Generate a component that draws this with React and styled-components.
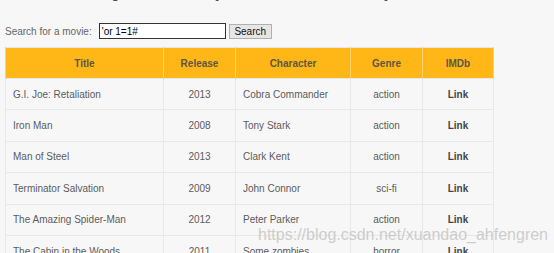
import styled, { createGlobalStyle } from 'styled-components'

const movies = [
  ['G.I. Joe: Retaliation', '2013', 'Cobra Commander', 'action'],
  ['Iron Man', '2008', 'Tony Stark', 'action'],
  ['Man of Steel', '2013', 'Clark Kent', 'action'],
  ['Terminator Salvation', '2009', 'John Connor', 'sci-fi'],
  ['The Amazing Spider-Man', '2012', 'Peter Parker', 'action'],
  ['The Cabin in the Woods', '2011', 'Some zombies', 'horror']
]

const GlobalStyle = createGlobalStyle`
  html, body {
    margin: 0;
    padding: 0;
    background: #f7f7f7;
    overflow: hidden;
  }
  body {
    font-family: "Liberation Sans", Arial, sans-serif;
  }
`

const Page = styled.main`
  position: relative;
  padding: 0 5px;
  height: 253px;
  overflow: hidden;
`

const Heading = styled.h1`
  margin: -30px 0 0;
  font-size: 30px;
  line-height: 30px;
  font-weight: normal;
  color: #4a4a4a;
  white-space: nowrap;
`

const Slash = styled.span`
  color: #ff8a5c;
`

const SearchForm = styled.form`
  display: flex;
  align-items: center;
  margin-top: 23px;
  height: 16px;
  font-size: 10px;
  color: #666;
`

const Label = styled.label`
  margin-right: 7px;
`

const Input = styled.input`
  box-sizing: border-box;
  width: 127px;
  height: 16px;
  margin: 0;
  padding: 0 2px;
  border: 1px solid #333;
  background: #fff;
  font-family: "Liberation Sans", Arial, sans-serif;
  font-size: 10px;
  color: #000;
`

const Button = styled.button`
  box-sizing: border-box;
  width: 43px;
  height: 15px;
  margin-left: 3px;
  padding: 0;
  border: 1px solid #b0b0b0;
  background: #e6e6e6;
  font-family: "Liberation Sans", Arial, sans-serif;
  font-size: 10px;
  color: #111;
`

const Table = styled.table`
  margin-top: 8px;
  width: 488px;
  border-collapse: collapse;
  table-layout: fixed;
  font-size: 10px;
  border: 1px solid #e6e6e6;
`

const Th = styled.th`
  height: 30px;
  padding: 0;
  background: #ffb717;
  color: #5e5546;
  font-weight: bold;
  text-align: center;
  border-left: 1px solid #ffd36e;
  border-right: 1px solid #ffd36e;
`

const Td = styled.td`
  height: 30.4px;
  padding: 0 7px;
  color: #5c5c5c;
  text-align: ${p => (p.$center ? 'center' : 'left')};
  border: 1px solid #e8e8e8;
  white-space: nowrap;
`

const LinkCell = styled(Td)`
  font-weight: bold;
  color: #454545;
`

const Watermark = styled.div`
  position: absolute;
  left: 258px;
  top: 226px;
  font-size: 16px;
  color: rgba(190, 190, 190, 0.75);
  white-space: nowrap;
  pointer-events: none;
`

export default function App() {
  return (
    <>
      <GlobalStyle />
      <Page>
        <Heading>
          <Slash>/</Slash> SQL Injection (GET/Search) <Slash>/</Slash>
        </Heading>
        <SearchForm onSubmit={e => e.preventDefault()}>
          <Label htmlFor='title'>Search for a movie:</Label>
          <Input id='title' defaultValue="'or 1=1#" />
          <Button>Search</Button>
        </SearchForm>
        <Table>
          <colgroup>
            <col style={{ width: 158 }} />
            <col style={{ width: 72 }} />
            <col style={{ width: 115 }} />
            <col style={{ width: 72 }} />
            <col style={{ width: 71 }} />
          </colgroup>
          <thead>
            <tr>
              <Th>Title</Th>
              <Th>Release</Th>
              <Th>Character</Th>
              <Th>Genre</Th>
              <Th>IMDb</Th>
            </tr>
          </thead>
          <tbody>
            {movies.map(m => (
              <tr key={m[0]}>
                <Td>{m[0]}</Td>
                <Td $center>{m[1]}</Td>
                <Td>{m[2]}</Td>
                <Td $center>{m[3]}</Td>
                <LinkCell $center>Link</LinkCell>
              </tr>
            ))}
          </tbody>
        </Table>
        <Watermark>https://blog.csdn.net/xuandao_ahfengren</Watermark>
      </Page>
    </>
  )
}
